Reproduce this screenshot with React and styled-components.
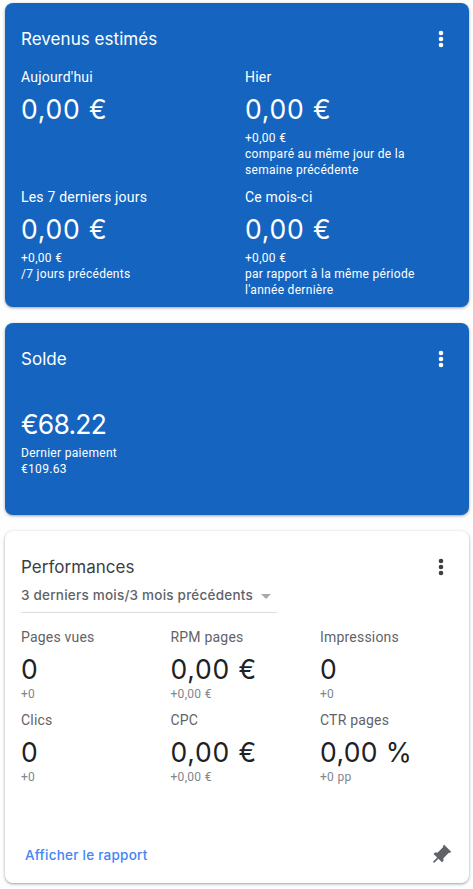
import React from "react";
import styled, { createGlobalStyle } from "styled-components";

const GlobalStyle = createGlobalStyle`
  * {
    box-sizing: border-box;
  }

  body {
    margin: 0;
    background-color: #fefefe;
    font-family: Roboto, "Liberation Sans", sans-serif;
  }
`;

const Page = styled.main`
  width: 473px;
  height: 889px;
  padding: 3px 4px 6px 5px;
  display: flex;
  flex-direction: column;
  gap: 16px;
  overflow: hidden;
`;

const Card = styled.section`
  height: ${({ $height }) => $height}px;
  padding: 0 16px;
  display: flex;
  flex-direction: column;
  border-radius: 8px;
  color: ${({ $blue }) => ($blue ? "#ffffff" : "#202124")};
  background-color: ${({ $blue }) => ($blue ? "#1565c0" : "#ffffff")};
  box-shadow: 0 1px 2px rgba(60, 64, 67, 0.3), 0 1px 3px 1px rgba(60, 64, 67, 0.15);
`;

const CardHeader = styled.header`
  height: 48px;
  padding-top: 24px;
  display: flex;
  justify-content: space-between;
`;

const Title = styled.h2`
  margin: 0;
  font-family: Inter, Lato, sans-serif;
  font-size: 17px;
  font-weight: 400;
  line-height: 24px;
  letter-spacing: 0.04px;
  color: ${({ $dark }) => ($dark ? "#3c4043" : "#ffffff")};
`;

const MenuButton = styled.button`
  width: 24px;
  height: 24px;
  padding: 0;
  border: none;
  background: none;
  color: ${({ $dark }) => ($dark ? "#3c4043" : "#ffffff")};
`;

const Revenues = styled.div`
  margin-top: 16px;
  display: grid;
  grid-template-columns: 224px 1fr;
  grid-auto-rows: 120px;
`;

const Metrics = styled.div`
  margin-top: 14px;
  display: grid;
  grid-template-columns: repeat(3, 149.5px);
  grid-auto-rows: 83px;
`;

const Balance = styled.div`
  margin-top: 31px;
`;

const Label = styled.div`
  font-size: 14px;
  line-height: 20px;
  letter-spacing: 0.2px;
  color: ${({ $muted }) => ($muted ? "#5f6368" : "#ffffff")};
`;

const Value = styled.div`
  padding-top: 6px;
  font-family: Inter, Lato, sans-serif;
  font-size: 26.5px;
  line-height: 33px;
  letter-spacing: ${({ $spacing }) => $spacing || 0}px;
  white-space: nowrap;
`;

const Change = styled.div`
  margin-top: ${({ $muted }) => ($muted ? 0 : 4)}px;
  font-size: 12px;
  line-height: 16px;
  letter-spacing: 0.3px;
  color: ${({ $muted }) => ($muted ? "#80868b" : "#ffffff")};
`;

const PeriodSelect = styled.div`
  width: 256px;
  height: 34px;
  padding: 5px 6px 0 0;
  display: flex;
  justify-content: space-between;
  border-bottom: 1px solid #dadce0;
  font-family: Inter, Lato, sans-serif;
  font-size: 13.5px;
  font-weight: 550;
  line-height: 23px;
  letter-spacing: 0.22px;
  white-space: nowrap;
  color: #5f6368;
`;

const Caret = styled.span`
  margin-top: 10px;
  width: 0;
  height: 0;
  border: 5px solid transparent;
  border-top-color: #a7a9ac;
  border-bottom: none;
`;

const CardFooter = styled.footer`
  margin-top: auto;
  height: 40px;
  padding: 0 0 0 4px;
  display: flex;
  justify-content: space-between;
`;

const ReportLink = styled.a`
  font-family: Inter, Lato, sans-serif;
  font-size: 13.5px;
  font-weight: 550;
  line-height: 24px;
  letter-spacing: 0.24px;
  color: #4285f4;
`;

const revenues = [
  { label: "Aujourd'hui", value: "0,00 €" },
  {
    label: "Hier",
    value: "0,00 €",
    change: "+0,00 €",
    note: ["comparé au même jour de la", "semaine précédente"],
  },
  {
    label: "Les 7 derniers jours",
    value: "0,00 €",
    change: "+0,00 €",
    note: ["/7 jours précédents"],
  },
  {
    label: "Ce mois-ci",
    value: "0,00 €",
    change: "+0,00 €",
    note: ["par rapport à la même période", "l'année dernière"],
  },
];

const metrics = [
  { label: "Pages vues", value: "0", change: "+0" },
  { label: "RPM pages", value: "0,00 €", change: "+0,00 €", spacing: 0.8 },
  { label: "Impressions", value: "0", change: "+0" },
  { label: "Clics", value: "0", change: "+0" },
  { label: "CPC", value: "0,00 €", change: "+0,00 €", spacing: 0.8 },
  { label: "CTR pages", value: "0,00 %", change: "+0 pp", spacing: 0.35 },
];

const Menu = ({ dark }) => (
  <MenuButton $dark={dark} aria-label="Menu">
    <svg width="24" height="24" viewBox="0 0 24 24" fill="currentColor">
      <circle cx="12" cy="6" r="2.3" />
      <circle cx="12" cy="12" r="2.3" />
      <circle cx="12" cy="18" r="2.3" />
    </svg>
  </MenuButton>
);

const PinIcon = () => (
  <svg width="24" height="24" viewBox="0 0 24 24" fill="#5f6368">
    <path
      transform="translate(-0.4 0.3) rotate(45 12 12)"
      d="M16 12V4h1V2H7v2h1v8l-2 2v2h5.2v6h1.6v-6H18v-2l-2-2z"
    />
  </svg>
);

const App = () => {
  return (
    <>
      <GlobalStyle />
      <Page>
        <Card $blue $height={304}>
          <CardHeader>
            <Title>Revenus estimés</Title>
            <Menu />
          </CardHeader>
          <Revenues>
            {revenues.map(({ label, value, change, note }) => (
              <div key={label}>
                <Label>{label}</Label>
                <Value $spacing={0.8}>{value}</Value>
                {change && (
                  <Change>
                    {change}
                    {note.map((line) => (
                      <div key={line}>{line}</div>
                    ))}
                  </Change>
                )}
              </div>
            ))}
          </Revenues>
        </Card>

        <Card $blue $height={192}>
          <CardHeader>
            <Title>Solde</Title>
            <Menu />
          </CardHeader>
          <Balance>
            <Value $spacing={-0.8}>€68.22</Value>
            <Change>
              Dernier paiement
              <div>€109.63</div>
            </Change>
          </Balance>
        </Card>

        <Card $height={352}>
          <CardHeader>
            <Title $dark>Performances</Title>
            <Menu dark />
          </CardHeader>
          <PeriodSelect>
            3 derniers mois/3 mois précédents
            <Caret />
          </PeriodSelect>
          <Metrics>
            {metrics.map(({ label, value, change, spacing }) => (
              <div key={label}>
                <Label $muted>{label}</Label>
                <Value $spacing={spacing}>{value}</Value>
                <Change $muted>{change}</Change>
              </div>
            ))}
          </Metrics>
          <CardFooter>
            <ReportLink>Afficher le rapport</ReportLink>
            <PinIcon />
          </CardFooter>
        </Card>
      </Page>
    </>
  );
};

export default App;
